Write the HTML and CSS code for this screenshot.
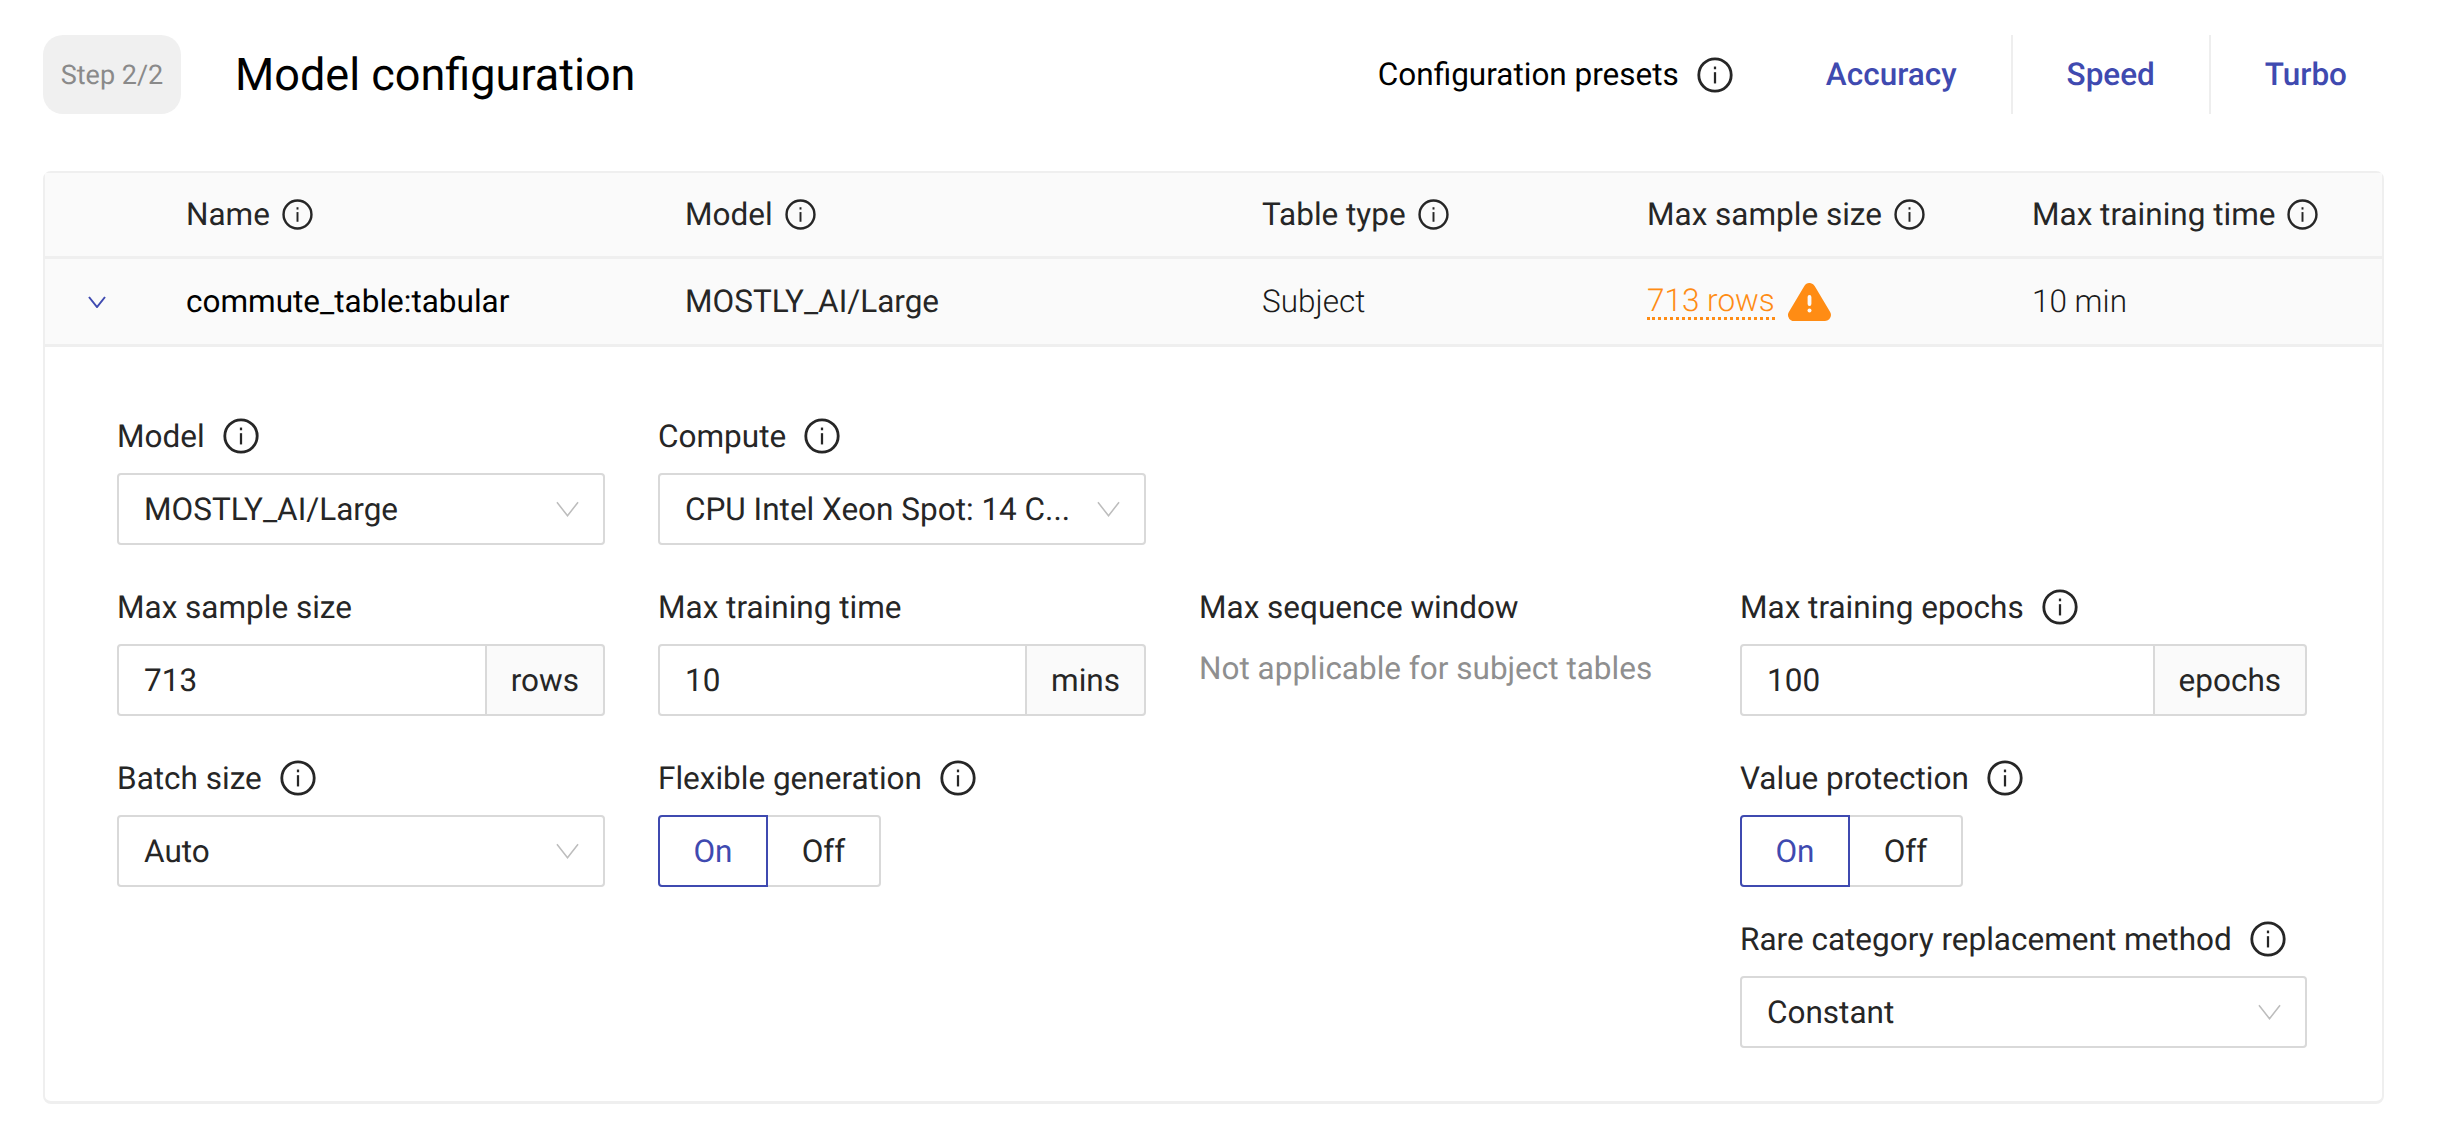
FILE: index.html
```html
<!DOCTYPE html>
<html lang="en">
<head>
<meta charset="utf-8">
<title>Model configuration</title>
<link rel="stylesheet" href="styles.css">
</head>
<body>
<svg class="defs" width="0" height="0" aria-hidden="true">
  <symbol id="info" viewBox="0 0 32 32">
    <circle cx="16" cy="16" r="14.4" fill="none" stroke="currentColor" stroke-width="2.500"/>
    <rect x="15" y="13.500" width="2" height="10" fill="currentColor"/>
    <rect x="15" y="8.500" width="2" height="2.400" fill="currentColor"/>
  </symbol>
  <symbol id="chev" viewBox="0 0 24 16">
    <path d="M1 1 L12 15 L23 1" fill="none" stroke="currentColor" stroke-width="1.600"/>
  </symbol>
  <symbol id="chev-b" viewBox="0 0 18 12">
    <path d="M1 1 L9 11 L17 1" fill="none" stroke="currentColor" stroke-width="2"/>
  </symbol>
</svg>

<header class="top">
  <div class="step">Step 2/2</div>
  <h1 class="title">Model configuration</h1>
  <div class="presets">
    <span class="presets-label">Configuration presets</span>
    <svg class="ico ico-lg"><use href="#info"/></svg>
    <a class="preset preset-first">Accuracy</a>
    <a class="preset">Speed</a>
    <a class="preset preset-last">Turbo</a>
  </div>
</header>

<section class="card">
  <div class="trow thead">
    <div></div>
    <div class="cell">Name <svg class="ico"><use href="#info"/></svg></div>
    <div class="cell">Model <svg class="ico"><use href="#info"/></svg></div>
    <div class="cell">Table type <svg class="ico"><use href="#info"/></svg></div>
    <div class="cell">Max sample size <svg class="ico"><use href="#info"/></svg></div>
    <div class="cell">Max training time <svg class="ico"><use href="#info"/></svg></div>
  </div>
  <div class="trow tbody">
    <div class="expander"><svg class="chev-blue"><use href="#chev-b"/></svg></div>
    <div class="cell cell-name">commute_table:tabular</div>
    <div class="cell cell-model">MOSTLY_AI/Large</div>
    <div class="cell">Subject</div>
    <div class="cell warn">
      <span class="warn-text">713 rows</span>
      <svg class="warn-ico" viewBox="0 0 43 38"><path d="M21.500 6 L6 32 L37 32 Z" fill="#ff8c14" stroke="#ff8c14" stroke-width="12" stroke-linejoin="round"/><rect x="19.600" y="12" width="3.800" height="11" rx="1.900" fill="#fafafa"/><circle cx="21.500" cy="27.500" r="2" fill="#fafafa"/></svg>
    </div>
    <div class="cell">10 min</div>
  </div>
  <div class="form">
    <div class="field">
      <div class="label">Model <svg class="ico ico-lg"><use href="#info"/></svg></div>
      <div class="select"><span class="value">MOSTLY_AI/Large</span><svg class="chev"><use href="#chev"/></svg></div>
    </div>
    <div class="field">
      <div class="label">Compute <svg class="ico ico-lg"><use href="#info"/></svg></div>
      <div class="select"><span class="value">CPU Intel Xeon Spot: 14 C...</span><svg class="chev"><use href="#chev"/></svg></div>
    </div>
    <div class="field col4"></div>

    <div class="field">
      <div class="label">Max sample size</div>
      <div class="group"><div class="input">713</div><div class="addon">rows</div></div>
    </div>
    <div class="field">
      <div class="label">Max training time</div>
      <div class="group"><div class="input">10</div><div class="addon">mins</div></div>
    </div>
    <div class="field">
      <div class="label">Max sequence window</div>
      <div class="muted">Not applicable for subject tables</div>
    </div>
    <div class="field">
      <div class="label">Max training epochs <svg class="ico ico-lg"><use href="#info"/></svg></div>
      <div class="group"><div class="input">100</div><div class="addon">epochs</div></div>
    </div>

    <div class="field">
      <div class="label">Batch size <svg class="ico ico-lg"><use href="#info"/></svg></div>
      <div class="select"><span class="value">Auto</span><svg class="chev"><use href="#chev"/></svg></div>
    </div>
    <div class="field">
      <div class="label">Flexible generation <svg class="ico ico-lg"><use href="#info"/></svg></div>
      <div class="toggle"><div class="tg tg-on">On</div><div class="tg tg-off">Off</div></div>
    </div>
    <div class="stack col4">
      <div class="field">
        <div class="label">Value protection <svg class="ico ico-lg"><use href="#info"/></svg></div>
        <div class="toggle"><div class="tg tg-on">On</div><div class="tg tg-off">Off</div></div>
      </div>
      <div class="field">
        <div class="label">Rare category replacement method <svg class="ico ico-lg"><use href="#info"/></svg></div>
        <div class="select"><span class="value">Constant</span><svg class="chev"><use href="#chev"/></svg></div>
      </div>
    </div>
  </div>
</section>
</body>
</html>
```

FILE: styles.css
```css
* { box-sizing: border-box; }
html, body { margin: 0; padding: 0; background: #fff; }
body {
  font-family: Roboto, "Liberation Sans", sans-serif;
  font-size: 31.5px;
  color: #262626;
  height: 1128px;
  overflow: hidden;
  padding: 35px 56px 0 43px;
  text-rendering: geometricPrecision;
}
.defs { position: absolute; }
.ico { width: 31px; height: 31px; color: #262626; flex: none; margin-left: 12px; }
.ico-lg { width: 36px; height: 36px; }

.top { display: flex; align-items: center; height: 79px; }
.step {
  width: 138px; height: 79px;
  background: #f0f0f0; border-radius: 20px;
  display: flex; align-items: center; justify-content: center;
  font-size: 27px; color: #8a8a8a;
}
.title { font-weight: 400; font-size: 45px; color: #000; margin: 0 0 0 54px; }
.presets { margin-left: auto; display: flex; align-items: center; color: #000; }
.presets .ico { margin-left: 18px; }
.preset {
  color: #3f4ab0; font-weight: 500; height: 79px; line-height: 79px;
  padding: 0 54px; border-right: 2px solid #eee;
}
.preset-first { margin-left: 39px; }
.preset-last { border-right: 0; padding-right: 37px; }

.card {
  margin-top: 57px;
  width: 2341px; height: 933px;
  border: 2px solid #efefef; border-radius: 8px;
  border-bottom-width: 3px;
}
.trow {
  display: grid;
  grid-template-columns: 141px 499px 577px 385px 385px 1fr;
  align-items: center;
  background: #fafafa;
  border-bottom: 3px solid #efefef;
  height: 88px;
}
.thead { height: 86px; }
.tbody { font-weight: 300; color: #1a1a1a; }
.cell { display: flex; align-items: center; white-space: nowrap; }
.cell-name { font-weight: 400; color: #000; }
.cell-model { font-weight: 400; color: #262626; }
.expander { display: flex; padding-left: 43px; }
.chev-blue { width: 18px; height: 12px; color: #3f4ab0; }
.warn { color: #ff8c14; }
.warn-text { border-bottom: 3px dotted #ff8c14; line-height: 33px; }
.warn-ico { width: 43px; height: 38px; margin-left: 13px; }

.form {
  display: grid;
  grid-template-columns: 488px 488px 488px 567px;
  column-gap: 53px;
  row-gap: 41px;
  padding: 68px 0 0 72px;
}
.col4 { grid-column: 4; }
.field { display: flex; flex-direction: column; }
.stack { display: flex; flex-direction: column; gap: 31px; }
.label { display: flex; align-items: center; height: 42px; margin-bottom: 16px; white-space: nowrap; }
.label .ico { margin-left: 18px; }
.select, .group, .toggle { height: 72px; display: flex; }
.select {
  align-items: center; justify-content: space-between;
  border: 2px solid #d9d9d9; border-radius: 4px;
  padding: 0 24px 0 25px;
}
.value { white-space: nowrap; }
.chev { width: 23px; height: 16px; color: #bdbdbd; flex: none; }
.input {
  flex: 1; border: 2px solid #d9d9d9; border-radius: 4px 0 0 4px;
  padding: 0 25px; display: flex; align-items: center;
}
.addon {
  background: #fafafa; border: 2px solid #d9d9d9; border-left: 0; border-radius: 0 4px 4px 0;
  padding: 0 24px; display: flex; align-items: center;
}
.muted { color: #8f8f8f; margin-top: 6px; }
.toggle { width: 223px; }
.tg { display: flex; align-items: center; justify-content: center; }
.tg-on { width: 110px; border: 2px solid #3f4ab0; color: #3f4ab0; border-radius: 4px 0 0 4px; }
.tg-off { width: 113px; border: 2px solid #d9d9d9; border-left: 0; border-radius: 0 4px 4px 0; }
```
